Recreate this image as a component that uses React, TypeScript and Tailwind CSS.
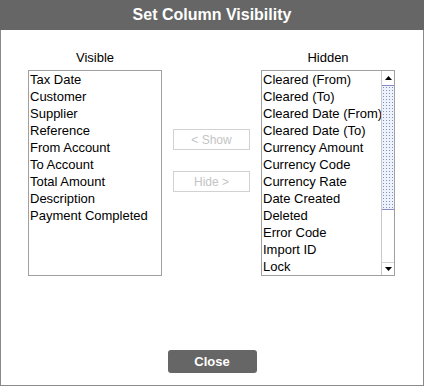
import React from "react";

const visible = [
  "Tax Date",
  "Customer",
  "Supplier",
  "Reference",
  "From Account",
  "To Account",
  "Total Amount",
  "Description",
  "Payment Completed",
];

const hidden = [
  "Cleared (From)",
  "Cleared (To)",
  "Cleared Date (From)",
  "Cleared Date (To)",
  "Currency Amount",
  "Currency Code",
  "Currency Rate",
  "Date Created",
  "Deleted",
  "Error Code",
  "Import ID",
  "Lock",
];

export default function App() {
  return (
    <div className="w-[424px] h-[386px] flex flex-col bg-white font-['Liberation_Sans',Arial,sans-serif] text-black">
      <div className="h-[30px] bg-[#666666] flex items-center justify-center text-white font-bold text-[16px] leading-none shrink-0">
        Set Column Visibility
      </div>
      <div className="flex-1 flex flex-col border-x border-b border-[#8a8a8a]">
        <div className="flex gap-[11px] pl-[27px] pt-[20px]">
          <div className="w-[134px] flex flex-col items-center">
            <div className="h-[20px] text-[13px] leading-[15px]">Visible</div>
            <div className="w-[134px] h-[206px] border border-[#a0a0a0] pl-px text-[13px] leading-[17px]">
              {visible.map((v) => (
                <div key={v} className="whitespace-nowrap">{v}</div>
              ))}
            </div>
          </div>
          <div className="w-[77px] flex flex-col pt-[79px]">
            <div className="h-[21px] border border-[#d2d2d2] text-[#c4c4c4] text-[12px] flex items-center justify-center">
              &lt; Show
            </div>
            <div className="h-[21px] mt-[21px] border border-[#d2d2d2] text-[#c4c4c4] text-[12px] flex items-center justify-center">
              Hide &gt;
            </div>
          </div>
          <div className="w-[134px] flex flex-col items-center">
            <div className="h-[20px] text-[13px] leading-[15px]">Hidden</div>
            <div className="w-[134px] h-[206px] border border-[#a0a0a0] flex">
              <div className="flex-1 pl-px text-[13px] leading-[17px] overflow-hidden">
                {hidden.map((v) => (
                  <div key={v} className="whitespace-nowrap">{v}</div>
                ))}
              </div>
              <div className="w-[13px] border-l border-[#c8c8c8] flex flex-col">
                <div className="h-[14px] flex items-center justify-center">
                  <svg width="7" height="4" viewBox="0 0 7 4">
                    <polygon points="3.5,0 7,4 0,4" fill="#000" />
                  </svg>
                </div>
                <div className="h-[125px] border-y border-[#8c8cc4] bg-[#eef2fb] bg-[radial-gradient(circle,#7f8fbf_0.6px,transparent_0.8px)] bg-[length:3px_3px]" />
                <div className="flex-1 bg-white" />
                <div className="h-[13px] border-t border-[#d0d0d0] flex items-center justify-center">
                  <svg width="7" height="4" viewBox="0 0 7 4">
                    <polygon points="0,0 7,0 3.5,4" fill="#000" />
                  </svg>
                </div>
              </div>
            </div>
          </div>
        </div>
        <div className="flex justify-center mt-[74px]">
          <div className="w-[89px] h-[23px] rounded-[3px] bg-[#666666] text-white font-bold text-[13px] flex items-center justify-center">
            Close
          </div>
        </div>
      </div>
    </div>
  );
}
